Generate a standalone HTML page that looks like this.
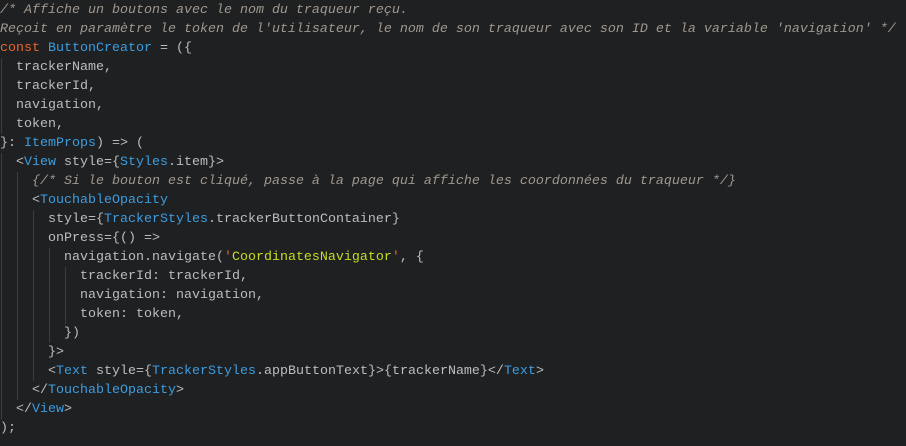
<!DOCTYPE html>
<html><head><meta charset="utf-8"><style>
html,body{margin:0;padding:0;background:#1e2022;width:906px;height:446px;overflow:hidden}
.p{margin:0;padding:1px 0 0 0;font-family:"Liberation Mono",monospace;font-size:13.33px;line-height:19px;color:#bdbdbd;position:relative}
.c{color:#a0988e;font-style:italic}
.k{color:#e8662e}
.b{color:#3d9de0}
.s{color:#c6dc24}
.q{color:#e8662e}
.l{display:block;height:19px;white-space:pre;position:relative}
.g{position:absolute;top:0;width:1px;height:19px;background:#3a3c3e}
</style></head><body><div class="p">
<span class="l"><span class="c">/* Affiche un boutons avec le nom du traqueur reçu.</span></span>
<span class="l"><span class="c">Reçoit en paramètre le token de l'utilisateur, le nom de son traqueur avec son ID et la variable 'navigation' */</span></span>
<span class="l"><span class="k">const</span> <span class="b">ButtonCreator</span> = ({</span>
<span class="l"><i class="g" style="left:1px"></i>  trackerName,</span>
<span class="l"><i class="g" style="left:1px"></i>  trackerId,</span>
<span class="l"><i class="g" style="left:1px"></i>  navigation,</span>
<span class="l"><i class="g" style="left:1px"></i>  token,</span>
<span class="l">}: <span class="b">ItemProps</span>) =&gt; (</span>
<span class="l"><i class="g" style="left:1px"></i>  &lt;<span class="b">View</span> style={<span class="b">Styles</span>.item}&gt;</span>
<span class="l"><i class="g" style="left:1px"></i><i class="g" style="left:17px"></i>    <span class="c">{/* Si le bouton est cliqué, passe à la page qui affiche les coordonnées du traqueur */}</span></span>
<span class="l"><i class="g" style="left:1px"></i><i class="g" style="left:17px"></i>    &lt;<span class="b">TouchableOpacity</span></span>
<span class="l"><i class="g" style="left:1px"></i><i class="g" style="left:17px"></i><i class="g" style="left:33px"></i>      style={<span class="b">TrackerStyles</span>.trackerButtonContainer}</span>
<span class="l"><i class="g" style="left:1px"></i><i class="g" style="left:17px"></i><i class="g" style="left:33px"></i>      onPress={() =&gt;</span>
<span class="l"><i class="g" style="left:1px"></i><i class="g" style="left:17px"></i><i class="g" style="left:33px"></i><i class="g" style="left:49px"></i>        navigation.navigate(<span class="q">'</span><span class="s">CoordinatesNavigator</span><span class="q">'</span>, {</span>
<span class="l"><i class="g" style="left:1px"></i><i class="g" style="left:17px"></i><i class="g" style="left:33px"></i><i class="g" style="left:49px"></i><i class="g" style="left:65px"></i>          trackerId: trackerId,</span>
<span class="l"><i class="g" style="left:1px"></i><i class="g" style="left:17px"></i><i class="g" style="left:33px"></i><i class="g" style="left:49px"></i><i class="g" style="left:65px"></i>          navigation: navigation,</span>
<span class="l"><i class="g" style="left:1px"></i><i class="g" style="left:17px"></i><i class="g" style="left:33px"></i><i class="g" style="left:49px"></i><i class="g" style="left:65px"></i>          token: token,</span>
<span class="l"><i class="g" style="left:1px"></i><i class="g" style="left:17px"></i><i class="g" style="left:33px"></i><i class="g" style="left:49px"></i>        })</span>
<span class="l"><i class="g" style="left:1px"></i><i class="g" style="left:17px"></i><i class="g" style="left:33px"></i>      }&gt;</span>
<span class="l"><i class="g" style="left:1px"></i><i class="g" style="left:17px"></i><i class="g" style="left:33px"></i>      &lt;<span class="b">Text</span> style={<span class="b">TrackerStyles</span>.appButtonText}&gt;{trackerName}&lt;/<span class="b">Text</span>&gt;</span>
<span class="l"><i class="g" style="left:1px"></i><i class="g" style="left:17px"></i>    &lt;/<span class="b">TouchableOpacity</span>&gt;</span>
<span class="l"><i class="g" style="left:1px"></i>  &lt;/<span class="b">View</span>&gt;</span>
<span class="l">);</span>
</div></body></html>
